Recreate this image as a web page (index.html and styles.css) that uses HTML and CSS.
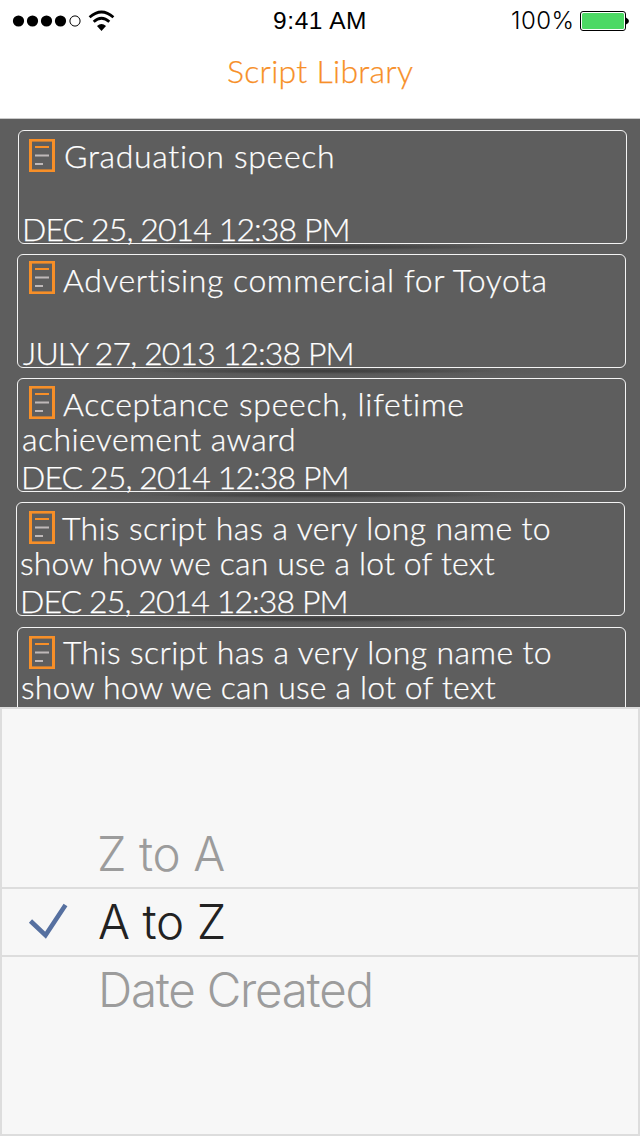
FILE: index.html
```
<!DOCTYPE html>
<html lang="en">
<head>
<meta charset="utf-8">
<title>Script Library</title>
<link rel="stylesheet" href="styles.css">
</head>
<body>
<svg width="0" height="0" class="defs" aria-hidden="true">
  <symbol id="doc" viewBox="0 0 26 33">
    <rect x="1.5" y="1.1" width="23" height="30.8" fill="none" stroke="#f78f28" stroke-width="3"/>
    <path d="M0 1H26M0 32H26" stroke="#f78f28" stroke-width="2"/>
    <path d="M6 8H20" stroke="#f78f28" stroke-width="2"/>
    <path d="M6 16.500H20M6 25H14" stroke="#bfb9b9" stroke-width="2"/>
  </symbol>
</svg>
<div class="phone">
  <header class="header">
    <div class="status">
      <svg class="signal" width="104" height="24" viewBox="0 0 104 24">
        <g fill="#000"><circle cx="6.500" cy="13" r="5.600"/><circle cx="20.500" cy="13" r="5.600"/><circle cx="34.500" cy="13" r="5.600"/><circle cx="48.500" cy="13" r="5.600"/></g>
        <circle cx="63" cy="13" r="5.100" fill="none" stroke="#000"/>
        <g fill="none" stroke="#000" stroke-width="2.800"><path d="M77.600 9.200Q89.500 -1.300 101.400 9.200"/><path d="M81.700 13.800Q89.500 6.800 97.300 13.800"/></g>
        <path d="M85 17.900Q89.500 14.200 94 17.900L89.500 23Z"/>
      </svg>
      <span class="time">9:41 AM</span>
      <span class="percent">100%</span>
      <svg class="battery" width="50" height="20" viewBox="0 0 50 20">
        <rect x=".5" y=".5" width="45" height="19" rx="2.500" fill="#fff" stroke="#000"/>
        <rect x="2" y="2" width="42" height="16" rx="1.500" fill="#4cd964"/>
        <path d="M46 6.500Q49 8 49 10T46 13.500Z"/>
      </svg>
    </div>
    <h1 class="heading">Script Library</h1>
  </header>
  <main class="list">
    <article class="card card-a">
      <div class="title"><div class="line"><svg class="icon"><use href="#doc"/></svg><span class="t1">Graduation speech</span></div></div>
      <div class="date">DEC 25, 2014 12:38 PM</div>
    </article>
    <article class="card card-b">
      <div class="title"><div class="line"><svg class="icon"><use href="#doc"/></svg><span class="t2">Advertising commercial for Toyota</span></div></div>
      <div class="date july">JULY 27, 2013 12:38 PM</div>
    </article>
    <article class="card card-c">
      <div class="title"><div class="line"><svg class="icon"><use href="#doc"/></svg><span class="t3">Acceptance speech, lifetime</span></div><div class="line t4">achievement award</div></div>
      <div class="date">DEC 25, 2014 12:38 PM</div>
    </article>
    <article class="card card-d">
      <div class="title"><div class="line"><svg class="icon"><use href="#doc"/></svg><span class="t5">This script has a very long name to</span></div><div class="line t6">show how we can use a lot of text</div></div>
      <div class="date">DEC 25, 2014 12:38 PM</div>
    </article>
    <article class="card card-e">
      <div class="title"><div class="line"><svg class="icon"><use href="#doc"/></svg><span class="t5">This script has a very long name to</span></div><div class="line t6">show how we can use a lot of text</div></div>
    </article>
  </main>
  <section class="picker">
    <div class="option z-to-a"><span>Z to A</span></div>
    <div class="option selected">
      <svg class="check" width="40" height="36" viewBox="0 0 40 36"><path d="M2.500 18L17.500 32.200L37.500 2" fill="none" stroke="#5670a0" stroke-width="4.600"/></svg>
      <span>A to Z</span>
    </div>
    <div class="option created"><span>Date Created</span></div>
  </section>
</div>
</body>
</html>
```
FILE: styles.css
```
* { box-sizing: border-box; }
body { margin: 0; font-family: Lato, sans-serif; font-weight: 300; }
.defs { position: absolute; }
.phone { width: 640px; height: 1136px; display: flex; flex-direction: column; overflow: hidden; background: #fff; }
.header { height: 119px; flex: none; border-bottom: 1px solid #c9c9c9; }
.status { height: 41px; display: flex; align-items: flex-start; font-family: "Liberation Sans", sans-serif; font-size: 24px; line-height: 28px; font-weight: 400; white-space: nowrap; padding: 7px 0 0 12px; }
.signal { margin-top: 1px; }
.time { margin-left: 157px; width: 103px; font-size: 24.500px; letter-spacing: 0.600px; }
.percent { width: 61px; margin-left: 135px; font-family: Inter, sans-serif; font-weight: 300; letter-spacing: 0.500px; }
.battery { margin: 4px 0 0 8px; }
.heading { margin: 11px 0 0 227px; font-size: 32px; line-height: 38px; font-weight: 300; letter-spacing: 0.280px; color: #f78f28; white-space: nowrap; -webkit-text-stroke: 0.250px #f78f28; }
.list { height: 588px; flex: none; overflow: hidden; background: #5e5e5e; padding: 11px 0 0 17px; display: flex; flex-direction: column; gap: 10px; color: #fff; }
.card { position: relative; width: 609px; height: 114px; flex: none; border: 1px solid #f4f4f4; border-radius: 6px; padding: 7px 0 0 4px; font-size: 32px; line-height: 35px; white-space: nowrap; -webkit-text-stroke: 0.250px #fff; }
.card::after { content: ""; position: absolute; left: 10px; right: 10px; top: 113px; height: 9px; background: radial-gradient(ellipse 180px 3px at 50% 3px, #3c3c3c 0%, rgba(60,60,60,.6) 45%, transparent 100%), radial-gradient(ellipse 290px 8px at 50% 2px, rgba(60,60,60,.3), transparent); }
.card-a { margin-left: 1px; }
.card-d { margin-left: -1px; }
.card-e { margin-top: 1px; height: 120px; padding-top: 6px; }
.title { height: 70px; }
.line { height: 35px; display: flex; align-items: flex-start; }
.icon { width: 26px; height: 33px; flex: none; margin: 0 8px 0 7px; }
.card-a .icon { margin: 1px 9px 0 6px; }
.card-b .icon { margin-top: -1px; }
.card-d .icon { margin: 1px 7px 0 8px; }
.card-e .icon { margin-top: 2px; }
.t1 { letter-spacing: 0.680px; }
.t2 { letter-spacing: 0.560px; }
.t3 { letter-spacing: 0.690px; }
.t4 { letter-spacing: 0.430px; }
.t5 { letter-spacing: 0.360px; }
.t6 { letter-spacing: 0.150px; margin-left: -1px; }
.date { margin-top: 3px; margin-left: -1px; letter-spacing: -0.900px; }
.july { letter-spacing: -0.880px; margin-left: 1px; }
.picker { flex: 1; border: 2px solid #ddd; background: #f7f7f7; padding-top: 112px; font-family: Inter, sans-serif; font-size: 47.500px; line-height: 66px; font-weight: 300; color: #9c9c9c; white-space: nowrap; }
.option { height: 66px; display: flex; padding-left: 95px; letter-spacing: -0.400px; }
.selected { height: 70px; border-top: 2px solid #ddd; border-bottom: 2px solid #ddd; color: #222; padding-left: 26px; }
.created { letter-spacing: -1.250px; padding-left: 96px; }
.check { margin: 14px 30px 0 0; }
```
